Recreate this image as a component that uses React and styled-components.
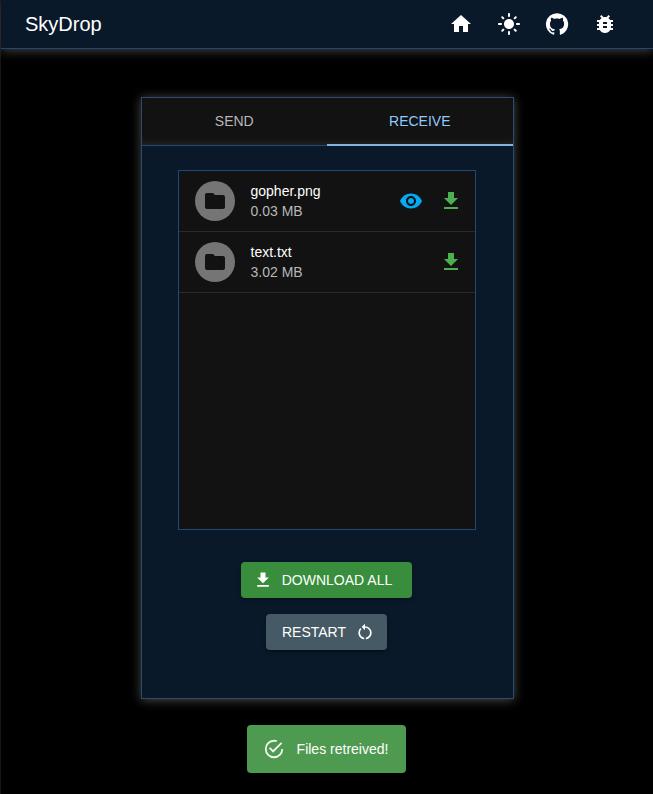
import React, { useState } from 'react';
import styled, { createGlobalStyle } from 'styled-components';
import {
  MdHome,
  MdLightMode,
  MdBugReport,
  MdFolder,
  MdVisibility,
  MdGetApp,
  MdRestartAlt,
} from 'react-icons/md';

const GlobalStyle = createGlobalStyle`
  *, *::before, *::after { box-sizing: border-box; }
  body {
    margin: 0;
    background: #000;
    color: #fff;
    font-family: Arial, 'Liberation Sans', sans-serif;
    font-size: 14px;
    line-height: 20px;
  }
`;

const Page = styled.div`
  min-height: 100vh;
  border-left: 1px solid #171612;
`;

const AppBar = styled.header`
  display: flex;
  align-items: center;
  justify-content: space-between;
  height: 49px;
  padding: 0 24px;
  background: #0a1929;
  border-bottom: 1px solid #1e4976;
  box-shadow: 0 2px 10px #404040;
`;

const Brand = styled.h1`
  margin: 0;
  font-size: 20px;
  line-height: 32px;
  font-weight: 400;
`;

const Nav = styled.nav`
  display: flex;
`;

const iconControl = `
  display: flex;
  align-items: center;
  justify-content: center;
  padding: 0;
  border: 0;
  background: transparent;
  cursor: pointer;
  svg { width: 24px; height: 24px; }
`;

const NavLink = styled.a`
  ${iconControl}
  width: 48px;
  height: 48px;
  color: #fff;
`;

const NavButton = styled.button`
  ${iconControl}
  width: 48px;
  height: 48px;
  color: #fff;
`;

const Main = styled.main`
  display: flex;
  justify-content: center;
  padding: 48px 16px;
`;

const Card = styled.section`
  width: 100%;
  max-width: 373px;
  background: #0a1929;
  border: 1px solid #2b4c6d;
  box-shadow: 0 1px 10px #4c4c4c;
`;

const TabList = styled.div`
  display: flex;
  height: 48px;
  background: #121212;
  border-bottom: 1px solid #1e4976;
  box-shadow: inset 0 -9px 8px -8px #2c2c2c;
`;

const Tab = styled.button`
  position: relative;
  flex: 1;
  padding: 0 0 2px;
  border: 0;
  background: transparent;
  color: ${(p) => (p['aria-selected'] ? '#90caf9' : '#b8b8b8')};
  font: inherit;
  text-transform: uppercase;
  cursor: pointer;

  &[aria-selected='true']::after {
    content: '';
    position: absolute;
    right: 0;
    bottom: -1px;
    left: 0;
    height: 2px;
    background: #81b3dc;
  }
`;

const Panel = styled.div`
  display: flex;
  flex-direction: column;
  align-items: center;
  padding: 24px 37px 48px 36px;
`;

const FileList = styled.ul`
  width: 100%;
  min-height: 360px;
  margin: 0 0 32px;
  padding: 0;
  list-style: none;
  background: #121212;
  border: 1px solid #1e4976;
`;

const FileRow = styled.li`
  display: flex;
  align-items: center;
  gap: 16px;
  padding: 10px 12px 10px 16px;
  border-bottom: 1px solid #2a2a2a;
`;

const Avatar = styled.span`
  display: flex;
  align-items: center;
  justify-content: center;
  width: 40px;
  height: 40px;
  border-radius: 50%;
  background: #757575;
  color: #121212;
  svg { width: 24px; height: 24px; }
`;

const FileText = styled.div`
  flex: 1;
  min-width: 0;
`;

const FileName = styled.div`
  color: #fff;
`;

const FileSize = styled.div`
  color: #b8b8b8;
`;

const Actions = styled.div`
  display: flex;
  gap: 16px;
`;

const ActionButton = styled.button`
  ${iconControl}
  color: ${(p) => p.$color};
`;

const Buttons = styled.div`
  display: flex;
  flex-direction: column;
  align-items: center;
  gap: 16px;
`;

const ContainedButton = styled.button`
  display: flex;
  align-items: center;
  gap: 9px;
  height: 36px;
  padding: 0 ${(p) => p.$end}px 0 ${(p) => p.$start}px;
  border: 0;
  border-radius: 4px;
  background: ${(p) => p.$color};
  color: #fff;
  font: inherit;
  text-transform: uppercase;
  cursor: pointer;
  box-shadow: 0 3px 1px -2px rgba(0, 0, 0, 0.2), 0 2px 2px rgba(0, 0, 0, 0.14),
    0 1px 5px rgba(0, 0, 0, 0.12);
  svg { width: 20px; height: 20px; }
`;

const SnackbarArea = styled.div`
  position: fixed;
  right: 0;
  bottom: 21px;
  left: 0;
  display: flex;
  justify-content: center;
  pointer-events: none;
`;

const Snackbar = styled.div`
  display: flex;
  align-items: center;
  gap: 12px;
  padding: 13px 18px 13px 16px;
  border-radius: 4px;
  background: #4f9a51;
  color: #fff;
  svg { width: 22px; height: 22px; fill: #f1f7f1; }
`;

const GitHubIcon = () => (
  <svg viewBox="0 0 24 24" fill="currentColor" aria-hidden="true">
    <path d="M12 1.27a11 11 0 00-3.48 21.46c.55.09.73-.28.73-.55v-1.84c-3.03.64-3.67-1.46-3.67-1.46-.55-1.29-1.28-1.65-1.28-1.65-.92-.65.1-.65.1-.65 1.1 0 1.73 1.1 1.73 1.1.92 1.65 2.57 1.2 3.21.92a2 2 0 01.64-1.47c-2.47-.27-5.04-1.19-5.04-5.5 0-1.1.46-2.1 1.2-2.84a3.76 3.76 0 010-2.93s.91-.28 3.11 1.1c1.8-.49 3.7-.49 5.5 0 2.1-1.38 3.02-1.1 3.02-1.1a3.76 3.76 0 01.1 2.93c.83.74 1.2 1.74 1.2 2.94 0 4.21-2.57 5.13-5.04 5.4.45.37.82.92.82 2.02v3.03c0 .27.1.64.73.55A11 11 0 0012 1.27" />
  </svg>
);

const SuccessIcon = () => (
  <svg viewBox="0 0 24 24" aria-hidden="true">
    <path d="M20,12A8,8 0 0,1 12,20A8,8 0 0,1 4,12A8,8 0 0,1 12,4C12.76,4 13.5,4.11 14.2,4.31L15.77,2.74C14.61,2.26 13.34,2 12,2A10,10 0 0,0 2,12A10,10 0 0,0 12,22A10,10 0 0,0 22,12H20M7.91,10.08L6.5,11.5L11,16L21,6L19.59,4.58L11,13.17L7.91,10.08Z" />
  </svg>
);

const files = [
  { name: 'gopher.png', size: '0.03 MB', preview: true },
  { name: 'text.txt', size: '3.02 MB', preview: false },
];

export default function App() {
  const [tab, setTab] = useState('receive');

  return (
    <>
      <GlobalStyle />
      <Page>
        <AppBar>
          <Brand>SkyDrop</Brand>
          <Nav aria-label="Main">
            <NavLink href="#home" aria-label="Home"><MdHome /></NavLink>
            <NavButton type="button" aria-label="Toggle theme"><MdLightMode /></NavButton>
            <NavLink href="#github" aria-label="GitHub"><GitHubIcon /></NavLink>
            <NavLink href="#issues" aria-label="Report a bug"><MdBugReport /></NavLink>
          </Nav>
        </AppBar>
        <Main>
          <Card>
            <TabList role="tablist" aria-label="Transfer">
              {['send', 'receive'].map((name) => (
                <Tab
                  key={name}
                  type="button"
                  role="tab"
                  aria-selected={tab === name}
                  onClick={() => setTab(name)}
                >
                  {name}
                </Tab>
              ))}
            </TabList>
            <Panel role="tabpanel">
              <FileList>
                {files.map((file) => (
                  <FileRow key={file.name}>
                    <Avatar><MdFolder /></Avatar>
                    <FileText>
                      <FileName>{file.name}</FileName>
                      <FileSize>{file.size}</FileSize>
                    </FileText>
                    <Actions>
                      {file.preview && (
                        <ActionButton type="button" $color="#03a9f4" aria-label={`Preview ${file.name}`}>
                          <MdVisibility />
                        </ActionButton>
                      )}
                      <ActionButton type="button" $color="#4caf50" aria-label={`Download ${file.name}`}>
                        <MdGetApp />
                      </ActionButton>
                    </Actions>
                  </FileRow>
                ))}
              </FileList>
              <Buttons>
                <ContainedButton type="button" $color="#388e3c" $start={12} $end={20}>
                  <MdGetApp aria-hidden="true" />
                  Download all
                </ContainedButton>
                <ContainedButton type="button" $color="#455a64" $start={16} $end={12}>
                  Restart
                  <MdRestartAlt aria-hidden="true" />
                </ContainedButton>
              </Buttons>
            </Panel>
          </Card>
        </Main>
        <SnackbarArea>
          <Snackbar role="status">
            <SuccessIcon />
            <span>Files retreived!</span>
          </Snackbar>
        </SnackbarArea>
      </Page>
    </>
  );
}
